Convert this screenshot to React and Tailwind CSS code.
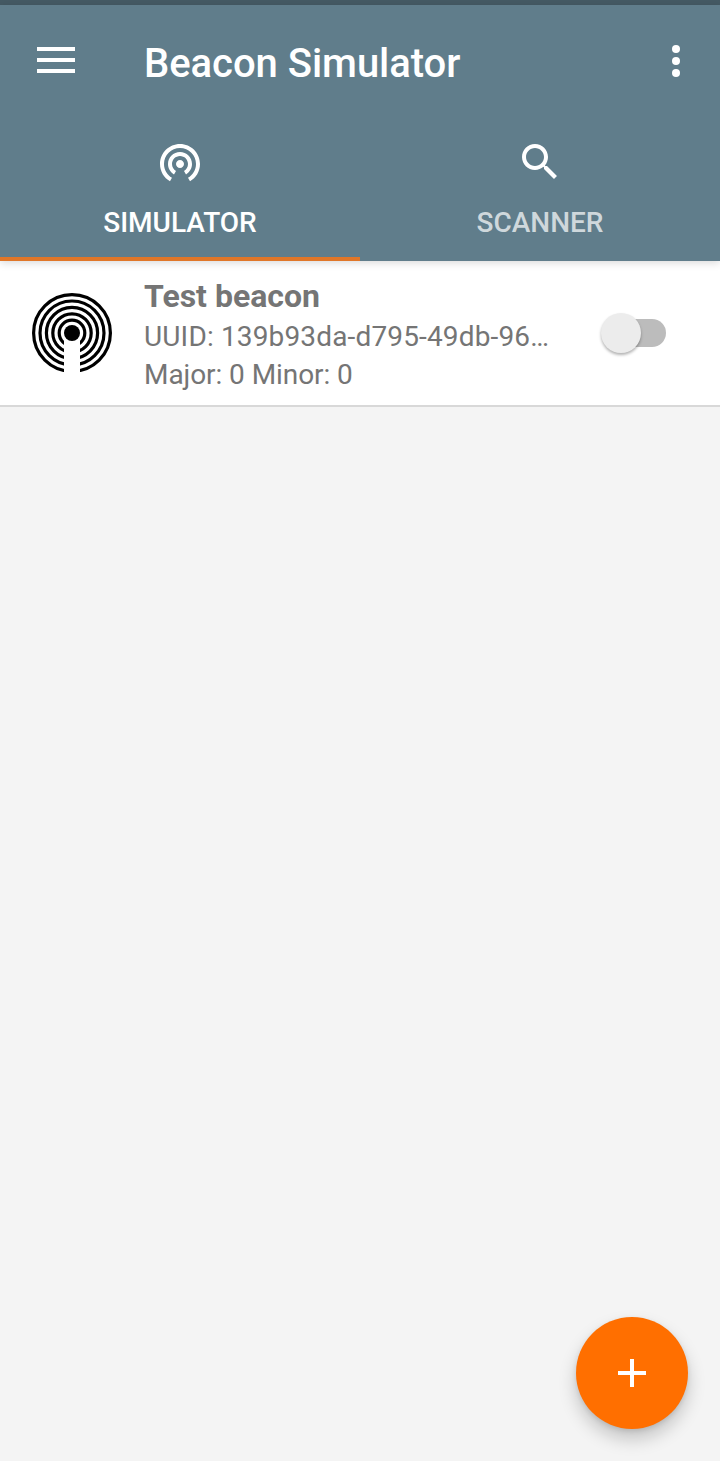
import { useState } from "react";
import { clsx } from "clsx";

const beacons = [
  {
    id: 1,
    name: "Test beacon",
    uuid: "139b93da-d795-49db-96…",
    major: 0,
    minor: 0,
  },
];

const TetheringIcon = () => (
  <svg className="size-12" viewBox="0 0 24 24" fill="currentColor">
    <path d="M12 11c-1.1 0-2 .9-2 2s.9 2 2 2 2-.9 2-2-.9-2-2-2zm6 2c0-3.31-2.69-6-6-6s-6 2.69-6 6c0 2.22 1.21 4.15 3 5.19l1-1.74c-1.19-.7-2-1.97-2-3.45 0-2.21 1.79-4 4-4s4 1.79 4 4c0 1.48-.81 2.75-2 3.45l1 1.74c1.79-1.04 3-2.97 3-5.19zM12 3C6.48 3 2 7.48 2 13c0 3.7 2.01 6.92 4.99 8.65l1-1.73C5.61 18.53 4 15.96 4 13c0-4.42 3.58-8 8-8s8 3.58 8 8c0 2.96-1.61 5.53-4 6.92l1 1.73c2.99-1.73 5-4.95 5-8.65 0-5.52-4.48-10-10-10z" />
  </svg>
);

const SearchIcon = () => (
  <svg className="size-12" viewBox="0 0 24 24" fill="currentColor">
    <path d="M15.5 14h-.79l-.28-.27C15.41 12.59 16 11.11 16 9.5 16 5.91 13.09 3 9.5 3S3 5.91 3 9.5 5.91 16 9.5 16c1.61 0 3.09-.59 4.23-1.57l.27.28v.79l5 4.99L20.49 19l-4.99-5zm-6 0C7.01 14 5 11.99 5 9.5S7.01 5 9.5 5 14 7.01 14 9.5 11.99 14 9.5 14z" />
  </svg>
);

const BeaconIcon = () => (
  <svg className="size-20 shrink-0" viewBox="0 0 80 80">
    <g fill="none" stroke="#000" strokeWidth="3.2">
      {[38.4, 32, 25.6, 19.2, 12.8].map((r) => (
        <circle key={r} cx="40" cy="40" r={r} />
      ))}
    </g>
    <rect x="32" y="42" width="16" height="38" fill="#fff" />
    <circle cx="40" cy="40" r="8" />
  </svg>
);

const tabs = [
  { id: "simulator", label: "SIMULATOR", icon: TetheringIcon },
  { id: "scanner", label: "SCANNER", icon: SearchIcon },
];

const Toolbar = () => (
  <div className="flex h-28 items-center pl-[37px] pr-10">
    <svg className="h-[26px] w-[38px] -translate-y-px" viewBox="0 0 38 26" fill="#fff">
      <path d="M0 0h38v4H0zM0 11h38v4H0zM0 22h38v4H0z" />
    </svg>
    <h1 className="ml-[69px] flex-1 pt-1.5 text-[40px] leading-12 font-medium tracking-[-0.04px]">
      Beacon Simulator
    </h1>
    <svg className="h-8 w-2" viewBox="0 0 8 32" fill="#fff">
      <circle cx="4" cy="4" r="4" />
      <circle cx="4" cy="16" r="4" />
      <circle cx="4" cy="28" r="4" />
    </svg>
  </div>
);

const Switch = ({ checked, onChange }) => (
  <button
    role="switch"
    aria-checked={checked}
    onClick={onChange}
    className="flex h-10 w-[65px] items-center"
  >
    <span
      className={clsx(
        "flex h-7 w-[57px] items-center rounded-full",
        checked ? "ml-0 justify-end bg-[#ffb780]" : "ml-2 bg-[#bcbcbc]",
      )}
    >
      <span
        className={clsx(
          "size-10 shrink-0 rounded-full shadow-[0_2px_3px_rgba(0,0,0,0.3)]",
          checked ? "-mr-2 bg-[#ff6f00]" : "-ml-2 bg-[#ececec]",
        )}
      />
    </span>
  </button>
);

const BeaconRow = ({ beacon }) => {
  const [enabled, setEnabled] = useState(false);

  return (
    <li className="flex h-[146px] items-center border-b-2 border-[#d8d8d8] bg-white pl-8 pr-[54px] text-[#757575]">
      <BeaconIcon />
      <div className="ml-8 w-[412px] pt-1">
        <div className="text-[32px] leading-[38px] font-bold">{beacon.name}</div>
        <div className="mt-[3px] text-[28px] leading-[38px] tracking-[0.15px] whitespace-nowrap">
          UUID: {beacon.uuid}
        </div>
        <div className="text-[28px] leading-[38px] tracking-[-0.07px]">
          Major: {beacon.major} Minor: {beacon.minor}
        </div>
      </div>
      <div className="ml-auto">
        <Switch checked={enabled} onChange={() => setEnabled(!enabled)} />
      </div>
    </li>
  );
};

export default function App() {
  const [activeTab, setActiveTab] = useState("simulator");

  return (
    <div className="flex h-[1461px] w-[720px] flex-col bg-[#f4f4f4] font-[Roboto,sans-serif]">
      <div className="h-[5px] bg-[#455a64]" />
      <header className="z-10 h-64 bg-[#607d8b] text-white shadow-[0_2px_8px_rgba(0,0,0,0.15)]">
        <Toolbar />
        <nav className="grid h-36 grid-cols-2">
          {tabs.map(({ id, label, icon: Icon }) => (
            <button
              key={id}
              onClick={() => setActiveTab(id)}
              className={clsx(
                "flex flex-col items-center border-b-4 pt-[21px]",
                activeTab === id ? "border-[#e07628]" : "border-transparent",
              )}
            >
              <Icon />
              <span
                className={clsx(
                  "mt-[21px] text-[28px] leading-8 font-medium",
                  activeTab === id ? "text-white" : "text-[#cfd8dc]",
                )}
              >
                {label}
              </span>
            </button>
          ))}
        </nav>
      </header>
      <ul>
        {beacons.map((beacon) => (
          <BeaconRow key={beacon.id} beacon={beacon} />
        ))}
      </ul>
      <button
        aria-label="Add beacon"
        className="mt-auto mr-8 mb-8 flex size-28 items-center justify-center self-end rounded-full bg-[#ff6f00] shadow-[0_10px_18px_rgba(0,0,0,0.2),0_2px_5px_rgba(0,0,0,0.1)]"
      >
        <svg className="size-7" viewBox="0 0 28 28" fill="#fff">
          <path d="M12 0h4v12h12v4H16v12h-4V16H0v-4h12z" />
        </svg>
      </button>
    </div>
  );
}
